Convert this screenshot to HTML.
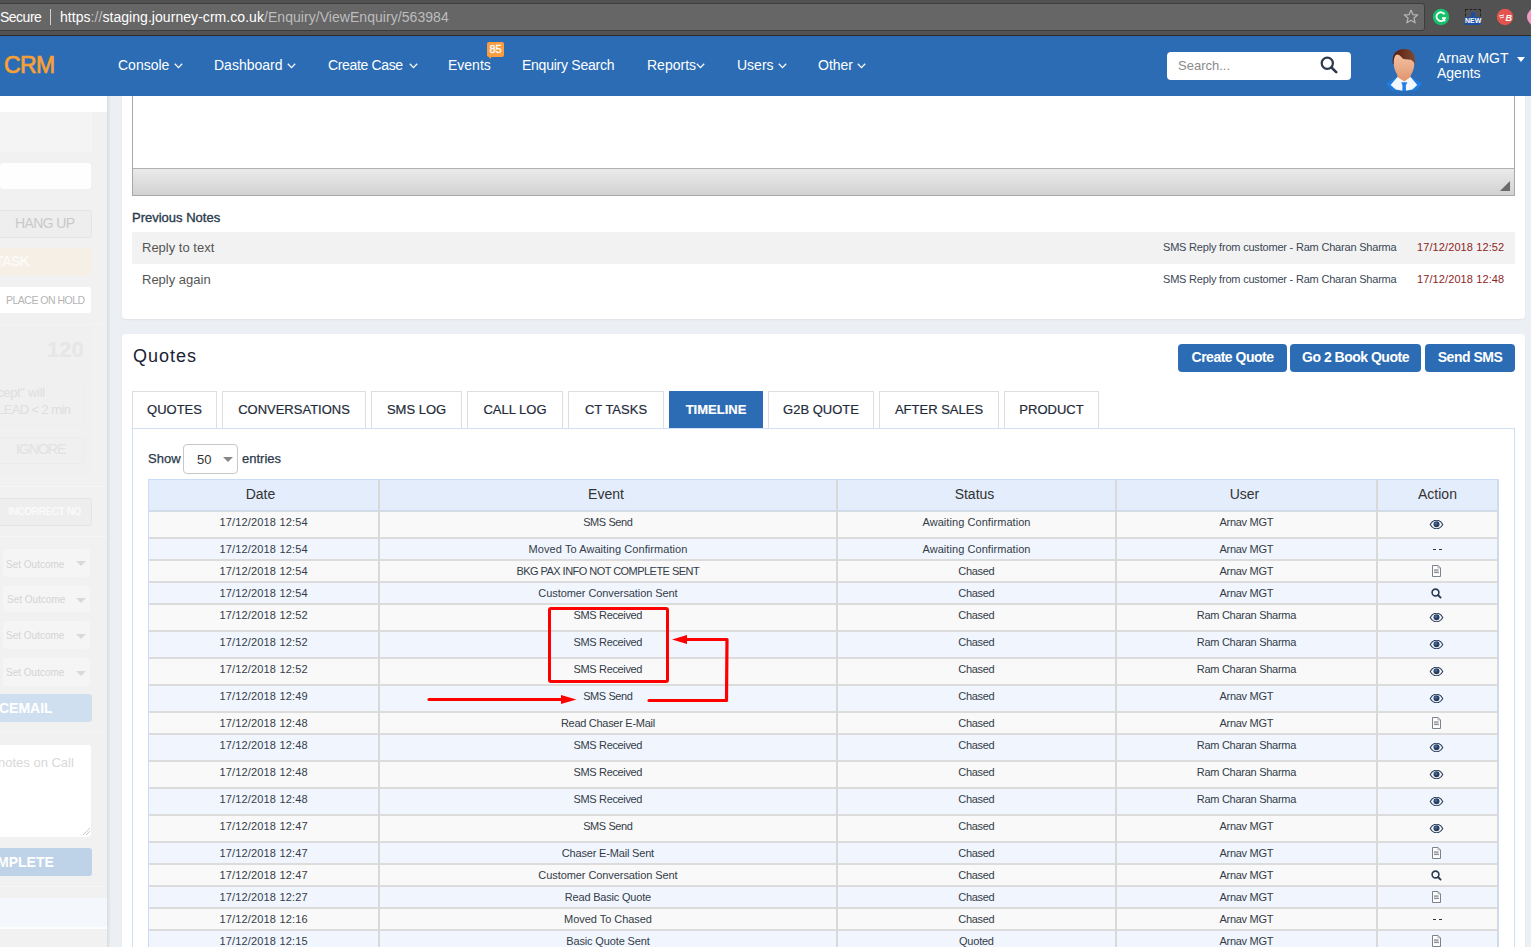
<!DOCTYPE html>
<html><head><meta charset="utf-8">
<style>
*{box-sizing:border-box;margin:0;padding:0}
html,body{width:1531px;height:947px;overflow:hidden;background:#eceff4;font-family:"Liberation Sans",sans-serif;position:relative}
.a{position:absolute}
.nw{white-space:nowrap}
/* chrome */
#chrome{z-index:6;left:0;top:0;width:1531px;height:35px;background:#525252}
#url{left:-6px;top:3px;width:1431px;height:28px;background:#666;border:1px solid #3e3e3e;border-radius:3px}
/* nav */
#nav{z-index:5;left:0;top:35px;width:1531px;height:61px;background:#2b6cb4;border-top:1px solid #2d2a28}
.ni{position:absolute;top:21px;color:#fff;font-size:14px;line-height:16px;white-space:nowrap}
.chev{position:absolute;width:9px;height:6px}
/* sidebar */
#side{left:0;top:96px;width:107px;height:851px;background:#f1f1f1;overflow:hidden}
#sideshadow{left:107px;top:96px;width:4px;height:851px;background:linear-gradient(to right,#d9dce1,#eceff4)}
.sbtn{position:absolute;border-radius:3px;white-space:nowrap;overflow:hidden}
/* cards */
.card{position:absolute;background:#fff;border-radius:4px;box-shadow:0 1px 2px rgba(0,0,0,0.06)}
.tab{position:absolute;top:391px;height:37px;border:1px solid #dedede;border-bottom:none;background:#fff;color:#1f2b3a;font-size:13px;line-height:16px;text-align:center;padding-top:10px;white-space:nowrap;-webkit-text-stroke:0.2px currentColor}
.btn{position:absolute;top:344px;height:28px;background:#2b6cb4;border-radius:4px;color:#fff;font-weight:bold;font-size:14px;line-height:16px;text-align:center;padding-top:5px;white-space:nowrap;letter-spacing:-0.5px}
.tr{position:absolute;left:148px;width:1350px;border-top:1px solid #dcdcdc;border-bottom:2px solid #dcdcdc;box-sizing:content-box}
.td{position:absolute;text-align:center;font-size:11px;line-height:14px;color:#333c48;white-space:nowrap;letter-spacing:-0.3px}
.td.dt{letter-spacing:0.15px}
.ic{position:absolute;width:15px;height:12px;line-height:0}
.vl{position:absolute;top:480px;width:2px;height:467px;background:#d9d9d9}
.th{position:absolute;top:486px;font-size:14px;line-height:16px;color:#333;text-align:center;white-space:nowrap}
</style></head><body>

<!-- browser chrome -->
<div id="chrome" class="a">
  <div id="url" class="a"></div>
  <div class="a nw" style="left:0;top:8px;font-size:14px;line-height:18px;color:#fff;letter-spacing:-0.5px">Secure</div>
  <div class="a" style="left:50px;top:9px;width:1px;height:16px;background:#d0d0d0"></div>
  <div class="a nw" style="left:60px;top:8px;font-size:14px;line-height:18px;color:#fff;letter-spacing:0.05px">https<span style="color:#bdbdbd">://</span>staging.journey-crm.co.uk<span style="color:#bdbdbd">/Enquiry/ViewEnquiry/563984</span></div>
  <svg class="a" style="left:1403px;top:9px" width="16" height="16" viewBox="0 0 16 16"><path d="M8 1.2 L9.9 5.6 L14.6 6 L11 9.1 L12.1 13.8 L8 11.3 L3.9 13.8 L5 9.1 L1.4 6 L6.1 5.6 Z" fill="none" stroke="#b4b4b4" stroke-width="1.3" stroke-linejoin="round"/></svg>
  <svg class="a" style="left:1432px;top:8px" width="18" height="18" viewBox="0 0 18 18"><circle cx="9" cy="9" r="8.2" fill="#15c26b"/><path d="M12.6 6.3 A4.4 4.4 0 1 0 13 10.2 L10 10.2" fill="none" stroke="#fff" stroke-width="1.8"/><path d="M11 11.5 L13.2 13.2" stroke="#fff" stroke-width="1.6"/></svg>
  <div class="a" style="left:1465px;top:9px;width:16px;height:16px;border:1px dashed #222"></div>
  <div class="a" style="left:1465px;top:17px;width:16px;height:8px;background:#1c4fa3;color:#fff;font-size:7px;line-height:8px;font-weight:bold;text-align:center">NEW</div>
  <div class="a" style="left:1471px;top:12px;width:4px;height:5px;background:#1c4fa3"></div>
  <svg class="a" style="left:1496px;top:8px" width="18" height="18" viewBox="0 0 18 18"><circle cx="9" cy="9" r="8.2" fill="#e3544f"/><text x="9.5" y="12.5" font-family="Liberation Sans" font-weight="bold" font-style="italic" font-size="9" fill="#fff">B</text><path d="M3 8 L8 7 M4 10 L8 9" stroke="#fff" stroke-width="1"/></svg>
  <div class="a" style="left:1527px;top:8px;width:18px;height:18px;border-radius:50%;background:#f39ac4"></div>
</div>

<!-- navbar -->
<div id="nav" class="a">
  <div class="a nw" style="left:4px;top:15px;font-size:23px;line-height:28px;color:#f7a135;font-weight:normal;-webkit-text-stroke:0.7px #f7a135;letter-spacing:-0.6px">CRM</div>
  <div class="ni" style="left:118px">Console</div><svg class="chev" style="left:174px;top:27px" width="9" height="6" viewBox="0 0 9 6"><path d="M0.8 0.8 L4.5 4.6 L8.2 0.8" fill="none" stroke="#fff" stroke-width="1.3"/></svg>
  <div class="ni" style="left:214px">Dashboard</div><svg class="chev" style="left:287px;top:27px" width="9" height="6" viewBox="0 0 9 6"><path d="M0.8 0.8 L4.5 4.6 L8.2 0.8" fill="none" stroke="#fff" stroke-width="1.3"/></svg>
  <div class="ni" style="left:328px;letter-spacing:-0.35px">Create Case</div><svg class="chev" style="left:409px;top:27px" width="9" height="6" viewBox="0 0 9 6"><path d="M0.8 0.8 L4.5 4.6 L8.2 0.8" fill="none" stroke="#fff" stroke-width="1.3"/></svg>
  <div class="ni" style="left:448px">Events</div>
  <div class="a" style="left:487px;top:6px;width:17px;height:15px;background:#f99d3f;border-radius:2px;color:#fff;font-size:11px;line-height:15px;text-align:center;-webkit-text-stroke:0.3px #fff">85</div>
  <div class="a" style="left:488px;top:19px;width:0;height:0;border-left:2px solid transparent;border-right:3px solid transparent;border-top:4px solid #f99d3f"></div>
  <div class="ni" style="left:522px;letter-spacing:-0.25px">Enquiry Search</div>
  <div class="ni" style="left:647px">Reports</div><svg class="chev" style="left:696px;top:27px" width="9" height="6" viewBox="0 0 9 6"><path d="M0.8 0.8 L4.5 4.6 L8.2 0.8" fill="none" stroke="#fff" stroke-width="1.3"/></svg>
  <div class="ni" style="left:737px">Users</div><svg class="chev" style="left:778px;top:27px" width="9" height="6" viewBox="0 0 9 6"><path d="M0.8 0.8 L4.5 4.6 L8.2 0.8" fill="none" stroke="#fff" stroke-width="1.3"/></svg>
  <div class="ni" style="left:818px">Other</div><svg class="chev" style="left:857px;top:27px" width="9" height="6" viewBox="0 0 9 6"><path d="M0.8 0.8 L4.5 4.6 L8.2 0.8" fill="none" stroke="#fff" stroke-width="1.3"/></svg>
  <!-- search -->
  <div class="a" style="left:1167px;top:16px;width:184px;height:28px;background:#fff;border-radius:4px"></div>
  <div class="a nw" style="left:1178px;top:22px;font-size:13px;line-height:16px;color:#8a8a8a">Search...</div>
  <svg class="a" style="left:1320px;top:20px" width="18" height="18" viewBox="0 0 18 18"><circle cx="7.3" cy="7.3" r="5.6" fill="none" stroke="#2c3a4b" stroke-width="2.2"/><path d="M11.5 11.5 L16.2 16.2" stroke="#2c3a4b" stroke-width="2.6" stroke-linecap="round"/></svg>
  <!-- avatar -->
  <svg class="a" style="left:1384px;top:10px" width="40" height="48" viewBox="0 0 40 48">
    <defs>
      <linearGradient id="hair" x1="0" y1="0" x2="1" y2="0"><stop offset="0" stop-color="#5a1a08"/><stop offset="1" stop-color="#7d4a36"/></linearGradient>
      <linearGradient id="face" x1="0" y1="0" x2="0" y2="1"><stop offset="0" stop-color="#f4c8ad"/><stop offset="1" stop-color="#e39a72"/></linearGradient>
    </defs>
    <path d="M2 37.6 L13.4 31 L26.6 31 L38 37.6 L32 44.5 L8 44.5 Z" fill="#1f7de2"/>
    <path d="M13.4 31 L6.6 39 L11.7 43.5 L20 45 L28.4 43.5 L33.2 39 L26.6 31 Z" fill="#f4f8fd"/>
    <path d="M13.4 27 L13.4 31 L20.3 35.5 L26.6 31 L26.6 27 Z" fill="#e39a72"/>
    <path d="M17.3 36.3 L23.4 36.3 L21.8 39.6 L22 45 L18.3 45 L18.5 39.6 Z" fill="#1f80e8"/>
    <path d="M9.6 16 C9.6 8 13 4 20.3 4 C27.5 4 30.6 8 30.4 17 C30.2 24 27 32.5 20.3 32.5 C13.5 32.5 9.6 24 9.6 16 Z" fill="url(#face)"/>
    <path d="M8.8 18.3 C7.8 8 12 3 20.3 3 C28.5 3 32 8 31 19.8 C30.5 17 30 16.2 29 15.5 C28 14 27 13.7 26.4 13.7 L19.5 13 C18.3 12.2 16.5 9 13.4 8.4 C11 8.2 9.6 12 9.6 18.3 Z" fill="url(#hair)"/>
  </svg>
  <div class="a nw" style="left:1437px;top:14px;font-size:14px;line-height:16px;color:#fff">Arnav MGT</div>
  <div class="a nw" style="left:1437px;top:29px;font-size:14px;line-height:16px;color:#fff">Agents</div>
  <div class="a" style="left:1517px;top:21px;width:0;height:0;border-left:4px solid transparent;border-right:4px solid transparent;border-top:5px solid #fff"></div>
</div>

<!-- sidebar -->
<div id="side" class="a">
  <div class="a" style="left:0;top:0;width:107px;height:16px;background:#fff"></div>
  <div class="a" style="left:0;top:16px;width:92px;height:40px;background:#f4f4f4"></div>
  <div class="a" style="left:0;top:67px;width:91px;height:26px;background:#fefefe;border-radius:3px"></div>
  <div class="sbtn" style="left:-4px;top:114px;width:96px;height:28px;background:#eeeeee;border:1px solid #e5e5e5"></div>
  <div class="a nw" style="left:15px;top:119px;font-size:14px;line-height:16px;color:#c9c9c9;letter-spacing:-0.6px">HANG UP</div>
  <div class="sbtn" style="left:-4px;top:152px;width:96px;height:28px;background:#f6efe5"></div>
  <div class="a nw" style="left:-5px;top:157px;font-size:14px;line-height:16px;color:#fcfaf6;font-weight:bold;letter-spacing:-0.8px">TASK</div>
  <div class="sbtn" style="left:-4px;top:191px;width:95px;height:26px;background:#fff"></div>
  <div class="a nw" style="left:6px;top:197px;font-size:10.5px;line-height:14px;color:#b4b4b4;letter-spacing:-0.5px">PLACE ON HOLD</div>
  <div class="a" style="left:0;top:228px;width:107px;height:1px;background:#f4f4f4"></div>
  <div class="a" style="left:0;top:230px;width:90px;height:148px;background:#f0f0f0"></div>
  <div class="a nw" style="left:47px;top:242px;font-size:22px;line-height:24px;color:#e6e6e6;font-weight:bold">120</div>
  <div class="a" style="left:-4px;top:281px;width:88px;height:48px;border:1px solid #eeeeee"></div>
  <div class="a nw" style="left:-3px;top:288px;font-size:13px;line-height:17px;color:#dedede;letter-spacing:-0.3px">cept" will</div>
  <div class="a nw" style="left:-3px;top:305px;font-size:13px;line-height:17px;color:#dedede;letter-spacing:-0.6px">LEAD &lt; 2 min</div>
  <div class="a" style="left:-4px;top:341px;width:88px;height:27px;border:1px solid #ececec;border-radius:3px"></div>
  <div class="a nw" style="left:16px;top:345px;font-size:14.5px;line-height:17px;color:#e2e2e2;letter-spacing:-1.3px">IGNORE</div>
  <div class="a" style="left:0;top:390px;width:107px;height:1px;background:#f5f5f5"></div>
  <div class="sbtn" style="left:-4px;top:402px;width:96px;height:28px;background:#eeeeee;border:1px solid #e4e4e4"></div>
  <div class="a nw" style="left:8px;top:409px;font-size:10px;line-height:13px;color:#fafafa;font-weight:bold;letter-spacing:-0.35px">INCORRECT NO</div>
  <div class="a" style="left:0;top:440px;width:107px;height:1px;background:#f5f5f5"></div>
  <div class="sbtn" style="left:3px;top:453px;width:87px;height:28px;background:#f5f5f5"></div>
  <div class="a nw" style="left:6px;top:462px;font-size:10px;line-height:13px;color:#d4d4d4">Set Outcome</div>
  <div class="a" style="left:76px;top:465px;border-left:5px solid transparent;border-right:5px solid transparent;border-top:5px solid #d9d9d9"></div>
  <div class="sbtn" style="left:3px;top:490px;width:87px;height:26px;background:#f5f5f5"></div>
  <div class="a nw" style="left:7px;top:497px;font-size:10px;line-height:13px;color:#d4d4d4">Set Outcome</div>
  <div class="a" style="left:76px;top:502px;border-left:5px solid transparent;border-right:5px solid transparent;border-top:5px solid #d9d9d9"></div>
  <div class="sbtn" style="left:3px;top:525px;width:87px;height:28px;background:#f5f5f5"></div>
  <div class="a nw" style="left:6px;top:533px;font-size:10px;line-height:13px;color:#d4d4d4">Set Outcome</div>
  <div class="a" style="left:76px;top:538px;border-left:5px solid transparent;border-right:5px solid transparent;border-top:5px solid #d9d9d9"></div>
  <div class="sbtn" style="left:3px;top:562px;width:87px;height:28px;background:#f5f5f5"></div>
  <div class="a nw" style="left:6px;top:570px;font-size:10px;line-height:13px;color:#d4d4d4">Set Outcome</div>
  <div class="a" style="left:76px;top:575px;border-left:5px solid transparent;border-right:5px solid transparent;border-top:5px solid #d9d9d9"></div>
  <div class="sbtn" style="left:-4px;top:598px;width:96px;height:28px;background:#d0dff0"></div>
  <div class="a nw" style="left:-1px;top:604px;font-size:14px;line-height:16px;color:#fff;font-weight:bold">CEMAIL</div>
  <div class="a" style="left:0;top:636px;width:107px;height:1px;background:#f4f4f4"></div>
  <div class="sbtn" style="left:-4px;top:649px;width:95px;height:92px;background:#fff"></div>
  <div class="a nw" style="left:-2px;top:659px;font-size:13px;line-height:16px;color:#d9d9d9">notes on Call</div>
  <svg class="a" style="left:82px;top:731px" width="9" height="9" viewBox="0 0 9 9"><path d="M1 8 L8 1 M4 8 L8 4" stroke="#bbb" stroke-width="0.8"/></svg>
  <div class="sbtn" style="left:-4px;top:752px;width:96px;height:28px;background:#bed2e8"></div>
  <div class="a nw" style="left:-3px;top:758px;font-size:14px;line-height:16px;color:#fff;font-weight:bold">MPLETE</div>
  <div class="a" style="left:0;top:790px;width:107px;height:1px;background:#f5f5f5"></div>
  <div class="a" style="left:0;top:802px;width:107px;height:31px;background:#f4f7fc;border-bottom:2px solid #fdfdfd"></div>
</div>
<div id="sideshadow" class="a"></div>

<!-- top card -->
<div class="card" style="left:122px;top:80px;width:1403px;height:239px"></div>
<div class="a" style="left:132px;top:96px;width:1383px;height:100px;border:1px solid #a8a8a8;border-top:none;background:#fff"></div>
<div class="a" style="left:133px;top:168px;width:1381px;height:27px;background:linear-gradient(#eaeaea,#d2d2d2);border-top:1px solid #b0b0b0"></div>
<div class="a" style="left:1500px;top:181px;width:0;height:0;border-left:10px solid transparent;border-bottom:10px solid #6a6a6a"></div>
<div class="a nw" style="left:132px;top:210px;font-size:13px;line-height:15px;color:#2c3a4b;-webkit-text-stroke:0.35px #2c3a4b">Previous Notes</div>
<div class="a" style="left:132px;top:232px;width:1383px;height:32px;background:#f2f2f2"></div>
<div class="a nw" style="left:142px;top:240px;font-size:13px;line-height:15px;color:#555">Reply to text</div>
<div class="a nw" style="left:142px;top:272px;font-size:13px;line-height:15px;color:#555">Reply again</div>
<div class="a nw" style="left:1163px;top:241px;font-size:11px;line-height:13px;color:#3b4756;letter-spacing:-0.2px">SMS Reply from customer - Ram Charan Sharma</div>
<div class="a nw" style="left:1163px;top:273px;font-size:11px;line-height:13px;color:#3b4756;letter-spacing:-0.2px">SMS Reply from customer - Ram Charan Sharma</div>
<div class="a nw" style="left:1417px;top:241px;font-size:11px;line-height:13px;color:#8e1f1f;letter-spacing:0.1px">17/12/2018 12:52</div>
<div class="a nw" style="left:1417px;top:273px;font-size:11px;line-height:13px;color:#8e1f1f;letter-spacing:0.1px">17/12/2018 12:48</div>

<!-- quotes card -->
<div class="card" style="left:122px;top:334px;width:1403px;height:700px"></div>
<div class="a nw" style="left:133px;top:346px;font-size:18px;line-height:21px;color:#1a2233;letter-spacing:1px">Quotes</div>
<div class="btn" style="left:1178px;width:109px">Create Quote</div>
<div class="btn" style="left:1290px;width:131px">Go 2 Book Quote</div>
<div class="btn" style="left:1425px;width:90px">Send SMS</div>

<div class="a" style="left:132px;top:428px;width:1383px;height:600px;border:1px solid #cfdff6"></div>
<div class="tab" style="left:132px;width:85px">QUOTES</div>
<div class="tab" style="left:222px;width:144px">CONVERSATIONS</div>
<div class="tab" style="left:371px;width:91px">SMS LOG</div>
<div class="tab" style="left:467px;width:96px">CALL LOG</div>
<div class="tab" style="left:568px;width:96px">CT TASKS</div>
<div class="tab" style="left:669px;width:94px;background:#2b6cb4;border-color:#2b6cb4;color:#fff;font-weight:bold">TIMELINE</div>
<div class="tab" style="left:768px;width:106px">G2B QUOTE</div>
<div class="tab" style="left:879px;width:120px">AFTER SALES</div>
<div class="tab" style="left:1004px;width:95px">PRODUCT</div>

<div class="a nw" style="left:148px;top:451px;font-size:13px;line-height:15px;color:#2c3a4b;-webkit-text-stroke:0.25px #2c3a4b">Show</div>
<div class="a" style="left:183px;top:444px;width:55px;height:30px;border:1px solid #c8c8c8;border-radius:4px;background:#fff"></div>
<div class="a nw" style="left:197px;top:452px;font-size:13px;line-height:15px;color:#333">50</div>
<div class="a" style="left:223px;top:457px;border-left:5px solid transparent;border-right:5px solid transparent;border-top:5px solid #888"></div>
<div class="a nw" style="left:242px;top:451px;font-size:13px;line-height:15px;color:#2c3a4b;-webkit-text-stroke:0.25px #2c3a4b">entries</div>

<!-- table header -->
<div class="a" style="left:148px;top:479px;width:1351px;height:32px;background:#e3edfc;border:1px solid #c8dbf7"></div>
<div class="th" style="left:149px;width:223px">Date</div>
<div class="th" style="left:380px;width:452px">Event</div>
<div class="th" style="left:838px;width:273px">Status</div>
<div class="th" style="left:1117px;width:255px">User</div>
<div class="th" style="left:1378px;width:119px">Action</div>

<div class="tr" style="top:511px;height:25px;background:#f9f9f9;border-top-width:1px"></div>
<div class="td dt" style="left:149px;width:229px;top:515px;letter-spacing:0.171px;text-indent:0.171px">17/12/2018 12:54</div>
<div class="td" style="left:380px;width:456px;top:515px;letter-spacing:-0.428px;text-indent:-0.428px">SMS Send</div>
<div class="td" style="left:838px;width:277px;top:515px;letter-spacing:0.06px;text-indent:0.06px">Awaiting Confirmation</div>
<div class="td" style="left:1117px;width:259px;top:515px;letter-spacing:-0.279px;text-indent:-0.279px">Arnav MGT</div>
<div class="ic" style="left:1429px;top:520px"><svg width="15" height="10" viewBox="0 0 15 10" style="height:9px"><path d="M0.6 5 C2.5 1.2 5 0.3 7.5 0.3 C10 0.3 12.5 1.2 14.4 5 C12.5 8.8 10 9.7 7.5 9.7 C5 9.7 2.5 8.8 0.6 5 Z" fill="none" stroke="#2b3f5c" stroke-width="1.3"/><circle cx="7.5" cy="4.8" r="3.3" fill="#2b3f5c"/><circle cx="6.8" cy="4" r="1.6" fill="#3b6aa8"/></svg></div>
<div class="tr" style="top:539px;height:20px;background:#f1f6fe;border-top-width:0px"></div>
<div class="td dt" style="left:149px;width:229px;top:542px;letter-spacing:0.171px;text-indent:0.171px">17/12/2018 12:54</div>
<div class="td" style="left:380px;width:456px;top:542px;letter-spacing:0.071px;text-indent:0.071px">Moved To Awaiting Confirmation</div>
<div class="td" style="left:838px;width:277px;top:542px;letter-spacing:0.06px;text-indent:0.06px">Awaiting Confirmation</div>
<div class="td" style="left:1117px;width:259px;top:542px;letter-spacing:-0.279px;text-indent:-0.279px">Arnav MGT</div>
<div class="ic" style="left:1433px;top:549px"><div style="width:3px;height:1px;background:#333;position:absolute;left:0"></div><div style="width:3px;height:1px;background:#333;position:absolute;left:6px"></div></div>
<div class="tr" style="top:561px;height:20px;background:#f9f9f9;border-top-width:0px"></div>
<div class="td dt" style="left:149px;width:229px;top:564px;letter-spacing:0.171px;text-indent:0.171px">17/12/2018 12:54</div>
<div class="td" style="left:380px;width:456px;top:564px;letter-spacing:-0.54px;text-indent:-0.54px">BKG PAX INFO NOT COMPLETE SENT</div>
<div class="td" style="left:838px;width:277px;top:564px;letter-spacing:-0.304px;text-indent:-0.304px">Chased</div>
<div class="td" style="left:1117px;width:259px;top:564px;letter-spacing:-0.279px;text-indent:-0.279px">Arnav MGT</div>
<div class="ic" style="left:1431px;top:565px"><svg width="11" height="12" viewBox="0 0 11 12"><path d="M1.5 0.5 H7 L9.5 3 V11.5 H1.5 Z" fill="#fdfdfd" stroke="#7b808a" stroke-width="1"/><path d="M7 0.5 V3 H9.5" fill="none" stroke="#9a9ea6" stroke-width="0.8"/><rect x="3" y="4.6" width="4.5" height="0.9" fill="#4a5160"/><rect x="3" y="6.6" width="5" height="1.5" fill="#8d929a"/></svg></div>
<div class="tr" style="top:583px;height:20px;background:#f1f6fe;border-top-width:0px"></div>
<div class="td dt" style="left:149px;width:229px;top:586px;letter-spacing:0.171px;text-indent:0.171px">17/12/2018 12:54</div>
<div class="td" style="left:380px;width:456px;top:586px;letter-spacing:-0.077px;text-indent:-0.077px">Customer Conversation Sent</div>
<div class="td" style="left:838px;width:277px;top:586px;letter-spacing:-0.304px;text-indent:-0.304px">Chased</div>
<div class="td" style="left:1117px;width:259px;top:586px;letter-spacing:-0.279px;text-indent:-0.279px">Arnav MGT</div>
<div class="ic" style="left:1431px;top:588px"><svg width="11" height="11" viewBox="0 0 11 11"><circle cx="4.5" cy="4.5" r="3.4" fill="none" stroke="#2a3a50" stroke-width="1.6"/><path d="M7 7 L9.6 9.6" stroke="#2a3a50" stroke-width="1.9" stroke-linecap="round"/></svg></div>
<div class="tr" style="top:605px;height:25px;background:#f9f9f9;border-top-width:0px"></div>
<div class="td dt" style="left:149px;width:229px;top:608px;letter-spacing:0.171px;text-indent:0.171px">17/12/2018 12:52</div>
<div class="td" style="left:380px;width:456px;top:608px;letter-spacing:-0.342px;text-indent:-0.342px">SMS Received</div>
<div class="td" style="left:838px;width:277px;top:608px;letter-spacing:-0.304px;text-indent:-0.304px">Chased</div>
<div class="td" style="left:1117px;width:259px;top:608px;letter-spacing:-0.271px;text-indent:-0.271px">Ram Charan Sharma</div>
<div class="ic" style="left:1429px;top:613px"><svg width="15" height="10" viewBox="0 0 15 10" style="height:9px"><path d="M0.6 5 C2.5 1.2 5 0.3 7.5 0.3 C10 0.3 12.5 1.2 14.4 5 C12.5 8.8 10 9.7 7.5 9.7 C5 9.7 2.5 8.8 0.6 5 Z" fill="none" stroke="#2b3f5c" stroke-width="1.3"/><circle cx="7.5" cy="4.8" r="3.3" fill="#2b3f5c"/><circle cx="6.8" cy="4" r="1.6" fill="#3b6aa8"/></svg></div>
<div class="tr" style="top:632px;height:25px;background:#f1f6fe;border-top-width:0px"></div>
<div class="td dt" style="left:149px;width:229px;top:635px;letter-spacing:0.171px;text-indent:0.171px">17/12/2018 12:52</div>
<div class="td" style="left:380px;width:456px;top:635px;letter-spacing:-0.342px;text-indent:-0.342px">SMS Received</div>
<div class="td" style="left:838px;width:277px;top:635px;letter-spacing:-0.304px;text-indent:-0.304px">Chased</div>
<div class="td" style="left:1117px;width:259px;top:635px;letter-spacing:-0.271px;text-indent:-0.271px">Ram Charan Sharma</div>
<div class="ic" style="left:1429px;top:640px"><svg width="15" height="10" viewBox="0 0 15 10" style="height:9px"><path d="M0.6 5 C2.5 1.2 5 0.3 7.5 0.3 C10 0.3 12.5 1.2 14.4 5 C12.5 8.8 10 9.7 7.5 9.7 C5 9.7 2.5 8.8 0.6 5 Z" fill="none" stroke="#2b3f5c" stroke-width="1.3"/><circle cx="7.5" cy="4.8" r="3.3" fill="#2b3f5c"/><circle cx="6.8" cy="4" r="1.6" fill="#3b6aa8"/></svg></div>
<div class="tr" style="top:659px;height:25px;background:#f9f9f9;border-top-width:0px"></div>
<div class="td dt" style="left:149px;width:229px;top:662px;letter-spacing:0.171px;text-indent:0.171px">17/12/2018 12:52</div>
<div class="td" style="left:380px;width:456px;top:662px;letter-spacing:-0.342px;text-indent:-0.342px">SMS Received</div>
<div class="td" style="left:838px;width:277px;top:662px;letter-spacing:-0.304px;text-indent:-0.304px">Chased</div>
<div class="td" style="left:1117px;width:259px;top:662px;letter-spacing:-0.271px;text-indent:-0.271px">Ram Charan Sharma</div>
<div class="ic" style="left:1429px;top:667px"><svg width="15" height="10" viewBox="0 0 15 10" style="height:9px"><path d="M0.6 5 C2.5 1.2 5 0.3 7.5 0.3 C10 0.3 12.5 1.2 14.4 5 C12.5 8.8 10 9.7 7.5 9.7 C5 9.7 2.5 8.8 0.6 5 Z" fill="none" stroke="#2b3f5c" stroke-width="1.3"/><circle cx="7.5" cy="4.8" r="3.3" fill="#2b3f5c"/><circle cx="6.8" cy="4" r="1.6" fill="#3b6aa8"/></svg></div>
<div class="tr" style="top:686px;height:25px;background:#f1f6fe;border-top-width:0px"></div>
<div class="td dt" style="left:149px;width:229px;top:689px;letter-spacing:0.171px;text-indent:0.171px">17/12/2018 12:49</div>
<div class="td" style="left:380px;width:456px;top:689px;letter-spacing:-0.428px;text-indent:-0.428px">SMS Send</div>
<div class="td" style="left:838px;width:277px;top:689px;letter-spacing:-0.304px;text-indent:-0.304px">Chased</div>
<div class="td" style="left:1117px;width:259px;top:689px;letter-spacing:-0.279px;text-indent:-0.279px">Arnav MGT</div>
<div class="ic" style="left:1429px;top:694px"><svg width="15" height="10" viewBox="0 0 15 10" style="height:9px"><path d="M0.6 5 C2.5 1.2 5 0.3 7.5 0.3 C10 0.3 12.5 1.2 14.4 5 C12.5 8.8 10 9.7 7.5 9.7 C5 9.7 2.5 8.8 0.6 5 Z" fill="none" stroke="#2b3f5c" stroke-width="1.3"/><circle cx="7.5" cy="4.8" r="3.3" fill="#2b3f5c"/><circle cx="6.8" cy="4" r="1.6" fill="#3b6aa8"/></svg></div>
<div class="tr" style="top:713px;height:20px;background:#f9f9f9;border-top-width:0px"></div>
<div class="td dt" style="left:149px;width:229px;top:716px;letter-spacing:0.171px;text-indent:0.171px">17/12/2018 12:48</div>
<div class="td" style="left:380px;width:456px;top:716px;letter-spacing:-0.285px;text-indent:-0.285px">Read Chaser E-Mail</div>
<div class="td" style="left:838px;width:277px;top:716px;letter-spacing:-0.304px;text-indent:-0.304px">Chased</div>
<div class="td" style="left:1117px;width:259px;top:716px;letter-spacing:-0.279px;text-indent:-0.279px">Arnav MGT</div>
<div class="ic" style="left:1431px;top:717px"><svg width="11" height="12" viewBox="0 0 11 12"><path d="M1.5 0.5 H7 L9.5 3 V11.5 H1.5 Z" fill="#fdfdfd" stroke="#7b808a" stroke-width="1"/><path d="M7 0.5 V3 H9.5" fill="none" stroke="#9a9ea6" stroke-width="0.8"/><rect x="3" y="4.6" width="4.5" height="0.9" fill="#4a5160"/><rect x="3" y="6.6" width="5" height="1.5" fill="#8d929a"/></svg></div>
<div class="tr" style="top:735px;height:25px;background:#f1f6fe;border-top-width:0px"></div>
<div class="td dt" style="left:149px;width:229px;top:738px;letter-spacing:0.171px;text-indent:0.171px">17/12/2018 12:48</div>
<div class="td" style="left:380px;width:456px;top:738px;letter-spacing:-0.342px;text-indent:-0.342px">SMS Received</div>
<div class="td" style="left:838px;width:277px;top:738px;letter-spacing:-0.304px;text-indent:-0.304px">Chased</div>
<div class="td" style="left:1117px;width:259px;top:738px;letter-spacing:-0.271px;text-indent:-0.271px">Ram Charan Sharma</div>
<div class="ic" style="left:1429px;top:743px"><svg width="15" height="10" viewBox="0 0 15 10" style="height:9px"><path d="M0.6 5 C2.5 1.2 5 0.3 7.5 0.3 C10 0.3 12.5 1.2 14.4 5 C12.5 8.8 10 9.7 7.5 9.7 C5 9.7 2.5 8.8 0.6 5 Z" fill="none" stroke="#2b3f5c" stroke-width="1.3"/><circle cx="7.5" cy="4.8" r="3.3" fill="#2b3f5c"/><circle cx="6.8" cy="4" r="1.6" fill="#3b6aa8"/></svg></div>
<div class="tr" style="top:762px;height:25px;background:#f9f9f9;border-top-width:0px"></div>
<div class="td dt" style="left:149px;width:229px;top:765px;letter-spacing:0.171px;text-indent:0.171px">17/12/2018 12:48</div>
<div class="td" style="left:380px;width:456px;top:765px;letter-spacing:-0.342px;text-indent:-0.342px">SMS Received</div>
<div class="td" style="left:838px;width:277px;top:765px;letter-spacing:-0.304px;text-indent:-0.304px">Chased</div>
<div class="td" style="left:1117px;width:259px;top:765px;letter-spacing:-0.271px;text-indent:-0.271px">Ram Charan Sharma</div>
<div class="ic" style="left:1429px;top:770px"><svg width="15" height="10" viewBox="0 0 15 10" style="height:9px"><path d="M0.6 5 C2.5 1.2 5 0.3 7.5 0.3 C10 0.3 12.5 1.2 14.4 5 C12.5 8.8 10 9.7 7.5 9.7 C5 9.7 2.5 8.8 0.6 5 Z" fill="none" stroke="#2b3f5c" stroke-width="1.3"/><circle cx="7.5" cy="4.8" r="3.3" fill="#2b3f5c"/><circle cx="6.8" cy="4" r="1.6" fill="#3b6aa8"/></svg></div>
<div class="tr" style="top:789px;height:25px;background:#f1f6fe;border-top-width:0px"></div>
<div class="td dt" style="left:149px;width:229px;top:792px;letter-spacing:0.171px;text-indent:0.171px">17/12/2018 12:48</div>
<div class="td" style="left:380px;width:456px;top:792px;letter-spacing:-0.342px;text-indent:-0.342px">SMS Received</div>
<div class="td" style="left:838px;width:277px;top:792px;letter-spacing:-0.304px;text-indent:-0.304px">Chased</div>
<div class="td" style="left:1117px;width:259px;top:792px;letter-spacing:-0.271px;text-indent:-0.271px">Ram Charan Sharma</div>
<div class="ic" style="left:1429px;top:797px"><svg width="15" height="10" viewBox="0 0 15 10" style="height:9px"><path d="M0.6 5 C2.5 1.2 5 0.3 7.5 0.3 C10 0.3 12.5 1.2 14.4 5 C12.5 8.8 10 9.7 7.5 9.7 C5 9.7 2.5 8.8 0.6 5 Z" fill="none" stroke="#2b3f5c" stroke-width="1.3"/><circle cx="7.5" cy="4.8" r="3.3" fill="#2b3f5c"/><circle cx="6.8" cy="4" r="1.6" fill="#3b6aa8"/></svg></div>
<div class="tr" style="top:816px;height:25px;background:#f9f9f9;border-top-width:0px"></div>
<div class="td dt" style="left:149px;width:229px;top:819px;letter-spacing:0.171px;text-indent:0.171px">17/12/2018 12:47</div>
<div class="td" style="left:380px;width:456px;top:819px;letter-spacing:-0.428px;text-indent:-0.428px">SMS Send</div>
<div class="td" style="left:838px;width:277px;top:819px;letter-spacing:-0.304px;text-indent:-0.304px">Chased</div>
<div class="td" style="left:1117px;width:259px;top:819px;letter-spacing:-0.279px;text-indent:-0.279px">Arnav MGT</div>
<div class="ic" style="left:1429px;top:824px"><svg width="15" height="10" viewBox="0 0 15 10" style="height:9px"><path d="M0.6 5 C2.5 1.2 5 0.3 7.5 0.3 C10 0.3 12.5 1.2 14.4 5 C12.5 8.8 10 9.7 7.5 9.7 C5 9.7 2.5 8.8 0.6 5 Z" fill="none" stroke="#2b3f5c" stroke-width="1.3"/><circle cx="7.5" cy="4.8" r="3.3" fill="#2b3f5c"/><circle cx="6.8" cy="4" r="1.6" fill="#3b6aa8"/></svg></div>
<div class="tr" style="top:843px;height:20px;background:#f1f6fe;border-top-width:0px"></div>
<div class="td dt" style="left:149px;width:229px;top:846px;letter-spacing:0.171px;text-indent:0.171px">17/12/2018 12:47</div>
<div class="td" style="left:380px;width:456px;top:846px;letter-spacing:-0.181px;text-indent:-0.181px">Chaser E-Mail Sent</div>
<div class="td" style="left:838px;width:277px;top:846px;letter-spacing:-0.304px;text-indent:-0.304px">Chased</div>
<div class="td" style="left:1117px;width:259px;top:846px;letter-spacing:-0.279px;text-indent:-0.279px">Arnav MGT</div>
<div class="ic" style="left:1431px;top:847px"><svg width="11" height="12" viewBox="0 0 11 12"><path d="M1.5 0.5 H7 L9.5 3 V11.5 H1.5 Z" fill="#fdfdfd" stroke="#7b808a" stroke-width="1"/><path d="M7 0.5 V3 H9.5" fill="none" stroke="#9a9ea6" stroke-width="0.8"/><rect x="3" y="4.6" width="4.5" height="0.9" fill="#4a5160"/><rect x="3" y="6.6" width="5" height="1.5" fill="#8d929a"/></svg></div>
<div class="tr" style="top:865px;height:20px;background:#f9f9f9;border-top-width:0px"></div>
<div class="td dt" style="left:149px;width:229px;top:868px;letter-spacing:0.171px;text-indent:0.171px">17/12/2018 12:47</div>
<div class="td" style="left:380px;width:456px;top:868px;letter-spacing:-0.077px;text-indent:-0.077px">Customer Conversation Sent</div>
<div class="td" style="left:838px;width:277px;top:868px;letter-spacing:-0.304px;text-indent:-0.304px">Chased</div>
<div class="td" style="left:1117px;width:259px;top:868px;letter-spacing:-0.279px;text-indent:-0.279px">Arnav MGT</div>
<div class="ic" style="left:1431px;top:870px"><svg width="11" height="11" viewBox="0 0 11 11"><circle cx="4.5" cy="4.5" r="3.4" fill="none" stroke="#2a3a50" stroke-width="1.6"/><path d="M7 7 L9.6 9.6" stroke="#2a3a50" stroke-width="1.9" stroke-linecap="round"/></svg></div>
<div class="tr" style="top:887px;height:20px;background:#f1f6fe;border-top-width:0px"></div>
<div class="td dt" style="left:149px;width:229px;top:890px;letter-spacing:0.171px;text-indent:0.171px">17/12/2018 12:27</div>
<div class="td" style="left:380px;width:456px;top:890px;letter-spacing:-0.192px;text-indent:-0.192px">Read Basic Quote</div>
<div class="td" style="left:838px;width:277px;top:890px;letter-spacing:-0.304px;text-indent:-0.304px">Chased</div>
<div class="td" style="left:1117px;width:259px;top:890px;letter-spacing:-0.279px;text-indent:-0.279px">Arnav MGT</div>
<div class="ic" style="left:1431px;top:891px"><svg width="11" height="12" viewBox="0 0 11 12"><path d="M1.5 0.5 H7 L9.5 3 V11.5 H1.5 Z" fill="#fdfdfd" stroke="#7b808a" stroke-width="1"/><path d="M7 0.5 V3 H9.5" fill="none" stroke="#9a9ea6" stroke-width="0.8"/><rect x="3" y="4.6" width="4.5" height="0.9" fill="#4a5160"/><rect x="3" y="6.6" width="5" height="1.5" fill="#8d929a"/></svg></div>
<div class="tr" style="top:909px;height:20px;background:#f9f9f9;border-top-width:0px"></div>
<div class="td dt" style="left:149px;width:229px;top:912px;letter-spacing:0.171px;text-indent:0.171px">17/12/2018 12:16</div>
<div class="td" style="left:380px;width:456px;top:912px;letter-spacing:-0.041px;text-indent:-0.041px">Moved To Chased</div>
<div class="td" style="left:838px;width:277px;top:912px;letter-spacing:-0.304px;text-indent:-0.304px">Chased</div>
<div class="td" style="left:1117px;width:259px;top:912px;letter-spacing:-0.279px;text-indent:-0.279px">Arnav MGT</div>
<div class="ic" style="left:1433px;top:919px"><div style="width:3px;height:1px;background:#333;position:absolute;left:0"></div><div style="width:3px;height:1px;background:#333;position:absolute;left:6px"></div></div>
<div class="tr" style="top:931px;height:20px;background:#f1f6fe;border-top-width:0px"></div>
<div class="td dt" style="left:149px;width:229px;top:934px;letter-spacing:0.171px;text-indent:0.171px">17/12/2018 12:15</div>
<div class="td" style="left:380px;width:456px;top:934px;letter-spacing:-0.147px;text-indent:-0.147px">Basic Quote Sent</div>
<div class="td" style="left:838px;width:277px;top:934px;letter-spacing:-0.219px;text-indent:-0.219px">Quoted</div>
<div class="td" style="left:1117px;width:259px;top:934px;letter-spacing:-0.279px;text-indent:-0.279px">Arnav MGT</div>
<div class="ic" style="left:1431px;top:935px"><svg width="11" height="12" viewBox="0 0 11 12"><path d="M1.5 0.5 H7 L9.5 3 V11.5 H1.5 Z" fill="#fdfdfd" stroke="#7b808a" stroke-width="1"/><path d="M7 0.5 V3 H9.5" fill="none" stroke="#9a9ea6" stroke-width="0.8"/><rect x="3" y="4.6" width="4.5" height="0.9" fill="#4a5160"/><rect x="3" y="6.6" width="5" height="1.5" fill="#8d929a"/></svg></div>

<div class="vl" style="left:378px"></div>
<div class="vl" style="left:836px"></div>
<div class="vl" style="left:1115px"></div>
<div class="vl" style="left:1376px"></div>
<div class="vl" style="left:1497px;width:1px"></div>
<div class="a" style="left:1498px;top:479px;width:1px;height:468px;background:#c8dbf7"></div>
<div class="a" style="left:148px;top:479px;width:1px;height:468px;background:#c8dbf7"></div>

<!-- annotations -->
<svg class="a" style="left:0;top:0;pointer-events:none" width="1531" height="947">
  <rect x="549.5" y="608.5" width="118" height="73" rx="1.5" fill="none" stroke="#ff0000" stroke-width="3"/>
  <path d="M649 700.5 L726.5 700.5 L727 639.5 L684 639.5" fill="none" stroke="#ff0000" stroke-width="3.2" stroke-linecap="round" stroke-linejoin="round"/>
  <path d="M672 639.5 L687 635 L687 644 Z" fill="#ff0000"/>
  <path d="M429 699.5 L563 699.5" fill="none" stroke="#ff0000" stroke-width="3.2" stroke-linecap="round"/>
  <path d="M576.5 699.5 L561 695 L561 704 Z" fill="#ff0000"/>
</svg>
</body></html>
